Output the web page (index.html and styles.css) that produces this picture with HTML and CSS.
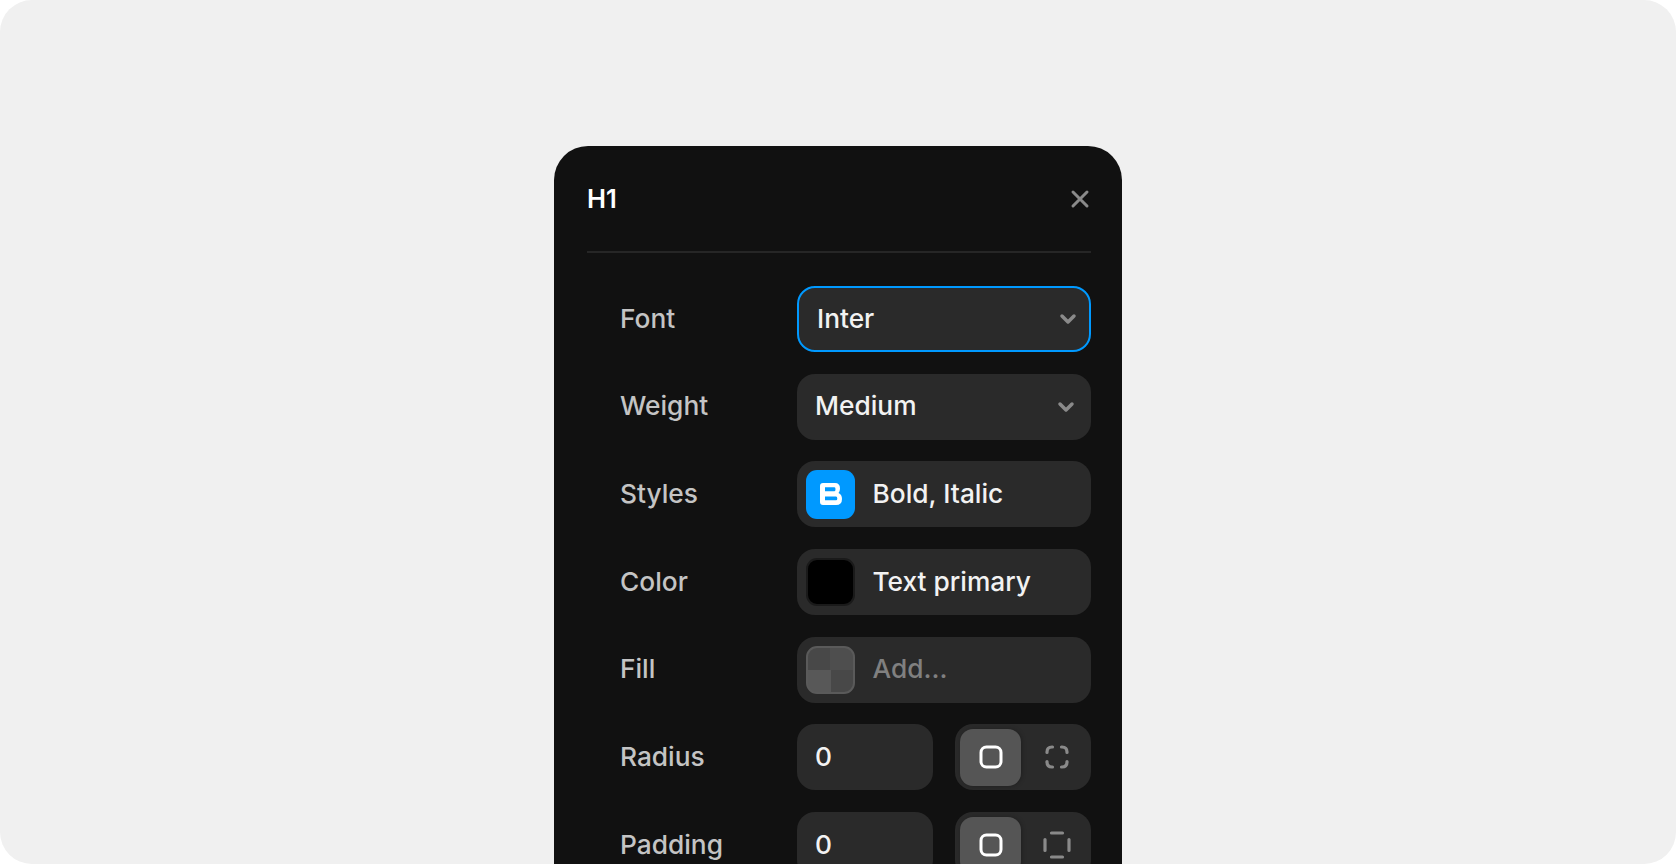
FILE: index.html
```html
<!DOCTYPE html>
<html lang="en">
<head>
    <meta charset="UTF-8">
    <title>H1 text style</title>
    <link rel="stylesheet" href="styles.css">
</head>
<body>
    <div class="page">
        <div class="panel">
            <div class="panel-header">
                <div class="panel-title">H1</div>
                <svg class="close-icon" width="20" height="20" viewBox="0 0 20 20">
                    <path d="M3 3L17 17M17 3L3 17"/>
                </svg>
            </div>

            <div class="fields">
                <div class="field">
                    <div class="field-label">Font</div>
                    <div class="control control-select control-focus">
                        <span class="control-text">Inter</span>
                        <svg class="chevron" width="18" height="12" viewBox="0 0 18 12"><path d="M3 3L9 9L15 3"/></svg>
                    </div>
                </div>

                <div class="field">
                    <div class="field-label">Weight</div>
                    <div class="control control-select">
                        <span class="control-text">Medium</span>
                        <svg class="chevron" width="18" height="12" viewBox="0 0 18 12"><path d="M3 3L9 9L15 3"/></svg>
                    </div>
                </div>

                <div class="field">
                    <div class="field-label">Styles</div>
                    <div class="control control-swatch">
                        <div class="swatch swatch-blue">
                            <svg class="bold-icon" width="22" height="22" viewBox="0 0 22 22">
                                <path fill="#fff" fill-rule="evenodd" d="M3 0H15Q20 0 20 5.500Q20 8.500 18.500 10Q22 11.500 22 16Q22 22 16 22H3Q0 22 0 19V3Q0 0 3 0ZM5 4.300V8.300H14.500Q15.500 8.300 15.500 6.300Q15.500 4.300 14.500 4.300ZM5 13.500V17.300H16Q17.300 17.300 17.300 15.400Q17.300 13.500 16 13.500Z"/>
                            </svg>
                        </div>
                        <span class="control-text">Bold, Italic</span>
                    </div>
                </div>

                <div class="field">
                    <div class="field-label">Color</div>
                    <div class="control control-swatch">
                        <div class="swatch swatch-black"></div>
                        <span class="control-text">Text primary</span>
                    </div>
                </div>

                <div class="field">
                    <div class="field-label">Fill</div>
                    <div class="control control-swatch">
                        <div class="swatch swatch-empty"></div>
                        <span class="control-text control-placeholder">Add...</span>
                    </div>
                </div>

                <div class="field">
                    <div class="field-label">Radius</div>
                    <div class="control-pair">
                        <div class="control"><span class="control-text">0</span></div>
                        <div class="segment">
                            <div class="segment-item segment-active">
                                <svg class="icon-on" width="24" height="24" viewBox="0 0 24 24"><rect x="2" y="2" width="20" height="20" rx="5.500"/></svg>
                            </div>
                            <div class="segment-item">
                                <svg class="icon-off" width="24" height="24" viewBox="0 0 24 24">
                                    <path d="M2 7.500V7Q2 2 7 2H7.500M16.500 2H17Q22 2 22 7V7.500M22 16.500V17Q22 22 17 22H16.500M7.500 22H7Q2 22 2 17V16.500"/>
                                </svg>
                            </div>
                        </div>
                    </div>
                </div>

                <div class="field">
                    <div class="field-label">Padding</div>
                    <div class="control-pair">
                        <div class="control"><span class="control-text">0</span></div>
                        <div class="segment">
                            <div class="segment-item segment-active">
                                <svg class="icon-on" width="24" height="24" viewBox="0 0 24 24"><rect x="2" y="2" width="20" height="20" rx="5.500"/></svg>
                            </div>
                            <div class="segment-item">
                                <svg class="icon-off" width="28" height="28" viewBox="0 0 28 28">
                                    <path d="M8.500 2H19.500M8.500 26H19.500M2 8.500V19.500M26 8.500V19.500"/>
                                </svg>
                            </div>
                        </div>
                    </div>
                </div>
            </div>
        </div>
    </div>
</body>
</html>
```

FILE: styles.css
```css
html {
    background-color: #fff;
}
body {
    margin: 0;
    font-family: Inter, "Liberation Sans", sans-serif;
}
.page {
    height: 864px;
    box-sizing: border-box;
    padding-top: 146px;
    display: flex;
    justify-content: center;
    background-color: #f0f0f0;
    border-radius: 32px;
    overflow: hidden;
}
.panel {
    width: 568px;
    height: 760px;
    flex-shrink: 0;
    box-sizing: border-box;
    padding: 0 31px 0 33px;
    background-color: #111;
    border-radius: 34px 34px 0 0;
}
.panel-header {
    height: 107px;
    box-sizing: border-box;
    display: flex;
    align-items: center;
    justify-content: space-between;
    border-bottom: 2px solid #262626;
}
.panel-title {
    color: #fff;
    font-size: 25.500px;
    font-weight: 600;
}
.close-icon {
    margin-right: 1px;
}
.close-icon path {
    fill: none;
    stroke: #8a8a8a;
    stroke-width: 3;
    stroke-linecap: round;
}
.fields {
    margin-top: 33px;
    display: flex;
    flex-direction: column;
    gap: 21.700px;
}
.field {
    display: flex;
    align-items: center;
    height: 66px;
}
.field-label {
    width: 177px;
    margin-left: 33px;
    padding-bottom: 2px;
    color: #c4c4c4;
    font-size: 26.300px;
    font-weight: 500;
}
.control {
    height: 66px;
    flex: 1;
    box-sizing: border-box;
    padding: 0 18px;
    display: flex;
    align-items: center;
    background-color: #2a2a2a;
    border-radius: 18px;
}
.control-text {
    padding-bottom: 2px;
    color: #f2f2f2;
    font-size: 26.300px;
    font-weight: 500;
}
.control-placeholder {
    color: #808080;
}
.control-select {
    justify-content: space-between;
    padding-right: 16px;
}
.control-focus {
    border: 2px solid #0099ff;
    padding-right: 12px;
}
.chevron path {
    fill: none;
    stroke: #8a8a8a;
    stroke-width: 3.500;
    stroke-linecap: round;
    stroke-linejoin: round;
}
.control-swatch {
    padding-left: 9px;
    gap: 18px;
}
.swatch {
    width: 48.500px;
    height: 48.500px;
    box-sizing: border-box;
    display: flex;
    align-items: center;
    justify-content: center;
    border-radius: 11px;
}
.swatch-blue {
    background-color: #0099ff;
}
.bold-icon {
    margin-left: 1px;
}
.swatch-black {
    background-color: #000;
    border: 2px solid #1a1a1a;
}
.swatch-empty {
    border: 2px solid #5a5a5a;
    background: conic-gradient(#4e4e4e 0 25%, #484848 25% 50%, #585858 50% 75%, #484848 75%);
}
.control-pair {
    flex: 1;
    display: grid;
    grid-template-columns: 1fr 1fr;
    gap: 22px;
}
.segment {
    height: 66px;
    box-sizing: border-box;
    padding: 4.500px;
    display: flex;
    background-color: #2a2a2a;
    border-radius: 18px;
}
.segment-item {
    flex: 1;
    padding-left: 7px;
    display: flex;
    align-items: center;
    justify-content: center;
    border-radius: 13px;
}
.segment-active {
    flex: 0 0 61.500px;
    box-sizing: border-box;
    padding-left: 2px;
    background-color: #555;
    box-shadow: 1px 0 4px rgba(0, 0, 0, 0.25);
}
.icon-on rect {
    fill: none;
    stroke: #fff;
    stroke-width: 3;
}
.icon-off path {
    fill: none;
    stroke: #8a8a8a;
    stroke-width: 3.200;
    stroke-linecap: round;
}
```
